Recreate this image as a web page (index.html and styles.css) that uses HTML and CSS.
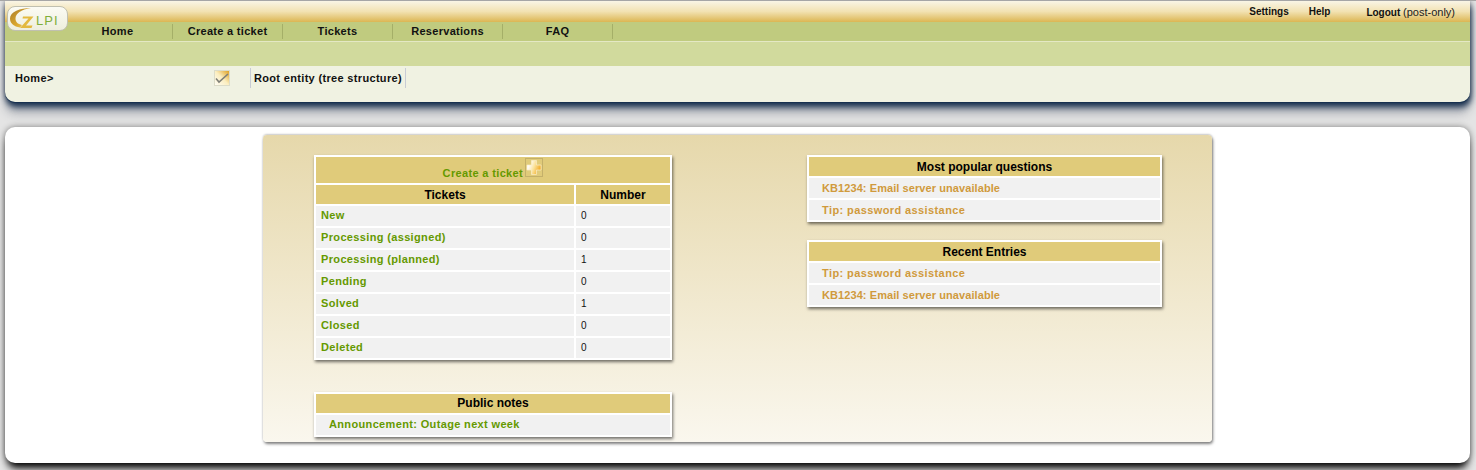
FILE: index.html
```html
<!DOCTYPE html>
<html lang="en">
<head>
<meta charset="utf-8">
<title>GLPI - Home</title>
<link rel="stylesheet" href="styles.css">
</head>
<body>
<header class="header">
  <div class="top">
    <a class="logo" href="#">
      <svg class="logo-g" viewBox="0 0 24 20" width="24" height="20" aria-hidden="true">
        <defs><linearGradient id="lg" x1="0" y1="0" x2="1" y2="1"><stop offset="0" stop-color="#a87c2a"/><stop offset=".55" stop-color="#d9a52c"/><stop offset="1" stop-color="#efd060"/></linearGradient></defs>
        <path d="M21 0C10 0 0 4 0 10.500 0 15.500 4 18.500 10 19.500L12 17C7.500 16 5.500 14 5.500 10.500 5.500 5.500 11 1.500 21 0z" fill="url(#lg)"/>
        <path d="M13 8.500h10.500L16 17.500h6.500L21.500 20H10l8.500-9.500h-6z" fill="#e3b93f"/>
      </svg>
      <span class="logo-t">LPI</span>
    </a>
    <nav class="prefs">
      <a href="#">Settings</a>
      <a href="#">Help</a>
      <a href="#" class="logout">Logout <span>(post-only)</span></a>
    </nav>
  </div>
  <nav class="menu">
    <a href="#">Home</a><a href="#">Create a ticket</a><a href="#">Tickets</a><a href="#">Reservations</a><a href="#">FAQ</a>
  </nav>
  <div class="submenu"></div>
  <div class="crumbs">
    <span class="crumb">Home&gt;</span>
    <svg class="check" viewBox="0 0 16 16" width="16" height="16" aria-hidden="true">
      <defs><linearGradient id="cg" x1="1" y1="0" x2="0" y2="1"><stop offset="0" stop-color="#dd9a14"/><stop offset=".5" stop-color="#fbeec0"/><stop offset="1" stop-color="#fffef8"/></linearGradient></defs>
      <rect x=".5" y=".5" width="15" height="15" fill="url(#cg)" stroke="#dcdcc8"/>
      <path d="M2 8.500 5 12 14 4" fill="none" stroke="#808078" stroke-width="1.600"/>
    </svg>
    <span class="entity">Root entity (tree structure)</span>
  </div>
</header>

<main class="page">
  <div class="central">
    <div class="col">
      <table class="box tickets">
        <colgroup><col><col class="c-num"></colgroup>
        <tr><th colspan="2" class="create"><a href="#">Create a ticket</a> <svg class="plus" viewBox="0 0 18 19" width="18" height="19" aria-hidden="true">
          <defs><linearGradient id="pg" x1="0" y1=".3" x2="1" y2=".7"><stop offset=".1" stop-color="#ffffff"/><stop offset=".5" stop-color="#fbe29a"/><stop offset="1" stop-color="#f0a010"/></linearGradient></defs>
          <rect x=".5" y=".5" width="17" height="18" fill="none" stroke="#c4b06a"/>
          <path d="M6.500 2.500h5v4.500h4.500v5h-4.500v4.500h-5v-4.500h-4.500v-5h4.500z" fill="url(#pg)" stroke="#fbeec8" stroke-width=".7"/>
        </svg></th></tr>
        <tr><th>Tickets</th><th>Number</th></tr>
        <tr><td><a href="#">New</a></td><td>0</td></tr>
        <tr><td><a href="#">Processing (assigned)</a></td><td>0</td></tr>
        <tr><td><a href="#">Processing (planned)</a></td><td>1</td></tr>
        <tr><td><a href="#">Pending</a></td><td>0</td></tr>
        <tr><td><a href="#">Solved</a></td><td>1</td></tr>
        <tr><td><a href="#">Closed</a></td><td>0</td></tr>
        <tr><td><a href="#">Deleted</a></td><td>0</td></tr>
      </table>
      <table class="box notes">
        <tr><th>Public notes</th></tr>
        <tr><td class="indent"><a href="#">Announcement: Outage next week</a></td></tr>
      </table>
    </div>
    <div class="col right">
      <table class="box kb">
        <tr><th>Most popular questions</th></tr>
        <tr><td class="indent"><a class="art" href="#">KB1234: Email server unavailable</a></td></tr>
        <tr><td class="indent"><a class="tip" href="#">Tip: password assistance</a></td></tr>
      </table>
      <table class="box kb recent">
        <tr><th>Recent Entries</th></tr>
        <tr><td class="indent"><a class="tip" href="#">Tip: password assistance</a></td></tr>
        <tr><td class="indent"><a class="art" href="#">KB1234: Email server unavailable</a></td></tr>
      </table>
    </div>
  </div>
</main>
</body>
</html>
```
FILE: styles.css
```css
* { box-sizing: border-box; }
html, body { margin: 0; height: 470px; overflow: hidden; }
body {
  background: #e4e4e4;
  border-top: 1px solid #a6a6a6;
  padding: 0 6px 0 5px;
  font-family: "Liberation Sans", Arial, sans-serif;
  font-size: 11px;
  font-weight: bold;
  color: #000;
}
a { color: inherit; text-decoration: none; }

.header {
  height: 101px;
  border-radius: 0 0 10px 10px;
  background: #f0f2e2;
  box-shadow: 0 1px 0 #17304f, 1px 5px 6px #17304f, 0 0 5px rgba(40,40,50,.55), 0 12px 10px rgba(70,80,100,.32);
}
.top {
  height: 21px;
  background: linear-gradient(#f9f5e6, #f2e2b2 50%, #dcb653);
  display: flex;
  justify-content: flex-end;
  position: relative;
}
.logo {
  position: absolute;
  left: 2px;
  top: 5px;
  width: 61px;
  height: 25px;
  border-radius: 8px;
  border: 1px solid #c0c0b0;
  background: linear-gradient(#fbfbf4, #eeeedd);
  z-index: 1;
}
.logo-g { position: absolute; left: 2px; top: 1px; }
.logo-t {
  position: absolute;
  left: 28px;
  top: 6px;
  font-weight: normal;
  font-size: 13px;
  line-height: 15px;
  letter-spacing: 1.1px;
  color: #7fae3a;
}
.prefs { display: flex; padding: 5px 15px 0 0; font-size: 10px; line-height: 12px; color: #111; }
.prefs a { margin-left: 20px; }
.prefs .logout { margin-left: 36px; }
.prefs span { font-weight: normal; font-size: 11px; color: #222; }

.menu {
  height: 20px;
  background: #c0cb7f;
  display: flex;
  padding: 2px 0 0 58px;
  border-bottom: 1px solid #e4e8c4;
}
.menu a {
  width: 110px;
  height: 15px;
  line-height: 14px;
  text-align: center;
  letter-spacing: .3px;
  color: #111;
  border-right: 1px solid #a5af68;
}
.submenu { height: 24px; background: #d1da9d; }
.crumbs {
  display: flex;
  align-items: center;
  height: 22px;
  margin-top: 1px;
  padding: 0 0 0 10px;
  color: #111;
  letter-spacing: .33px;
}
.crumb { width: 199px; }
.check { margin-right: 20px; }
.entity {
  padding: 0 3px;
  line-height: 20px;
  border-left: 1px solid #c8ccd4;
  border-right: 1px solid #c8ccd4;
}

.page {
  margin-top: 25px;
  height: 336px;
  background: #fff;
  border-radius: 10px;
  padding-top: 8px;
  display: flex;
  justify-content: center;
  box-shadow: 0 8px 8px -3px #000, 0 0 6px rgba(0,0,0,.45);
}
.central {
  width: 949px;
  height: 307px;
  border-radius: 4px;
  background: linear-gradient(#e6d8ab, #faf7ee);
  box-shadow: 0 -1px 2px rgba(0,0,0,.2), 1px 2px 3px rgba(0,0,0,.5);
  display: flex;
  padding: 20px 0 0 51px;
}
.col { width: 493px; }
.right { width: 355px; }

.box {
  border-collapse: separate;
  border-spacing: 2px;
  background: #fff;
  box-shadow: 1px 2px 3px rgba(0,0,0,.55);
  table-layout: fixed;
  width: 358px;
}
.c-num { width: 94px; }
.box th {
  background: #e0cb7a;
  height: 19px;
  padding: 0;
  font-size: 12px;
  line-height: 14px;
  text-align: center;
  color: #000;
}
.box td {
  background: #f1f1f1;
  height: 20px;
  padding: 0 5px;
  color: #111;
  font-weight: normal;
  font-size: 10px;
  line-height: 14px;
}
.box td a, .create a {
  color: #659900;
  font-weight: bold;
  font-size: 11px;
  letter-spacing: .35px;
}
.tickets td a, .notes td a { vertical-align: 1px; }
.box .create { height: 26px; vertical-align: bottom; padding-bottom: 3px; line-height: 13px; }
.plus { vertical-align: 0; margin-left: -1px; }
.notes { margin-top: 32px; }
.box.notes th { padding-bottom: 2px; }
.box td.indent { padding-left: 13px; }
.kb { width: 355px; }
.box td .art { color: #d09a3c; letter-spacing: .08px; }
.box td .tip { color: #d09a3c; letter-spacing: .4px; }
.recent { margin-top: 18px; }
```
